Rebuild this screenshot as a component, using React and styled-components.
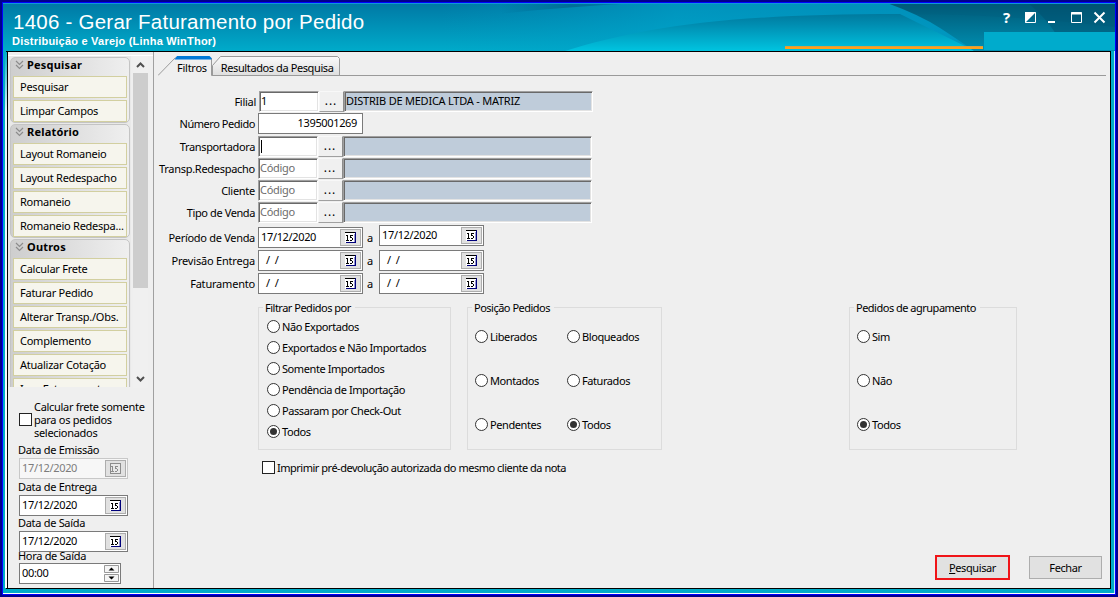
import React from "react";
import styled, { createGlobalStyle, css } from "styled-components";

const Global = createGlobalStyle`
  *, *::before, *::after { box-sizing: border-box; }
  body { margin: 0; overflow: hidden; }
  #root { font: 11px/13px "Noto Sans", "Liberation Sans", sans-serif; letter-spacing: -0.25px; color: #000; }
`;

const Outer = styled.div`
  width: 1118px; height: 597px; background: #00008b; padding: 2px;
`;
const Window = styled.div`
  height: 593px; border: 1px solid #0000ff; display: flex; flex-direction: column;
  background: #00acc8; box-shadow: inset 0 -1px 0 #fff, inset -1px 0 0 #b4e8f4;
`;
const Header = styled.header`
  position: relative; height: 48px; flex: none; padding: 8px 9px 0 9px;
  display: flex; justify-content: space-between; color: #fff;
`;
const HeaderArt = styled.svg`position: absolute; left: 0; top: 0; display: block;`;
const Titles = styled.div`position: relative; font-family: "Liberation Sans", Arial, sans-serif;`;
const Title = styled.h1`
  margin: 0; padding-left: 1px; font-size: 20.5px; line-height: 22px; font-weight: 400; letter-spacing: 0.24px; white-space: nowrap;
`;
const Subtitle = styled.div`font-size: 11px; line-height: 14px; font-weight: 700; letter-spacing: 0.22px; margin-top: 1px; white-space: nowrap;`;
const WinIcons = styled.svg`position: relative; display: block; flex: none; overflow: visible;`;

const Body = styled.div`
  height: 538px; flex: none; margin: 0 4px 0 3px; border: 1px solid #000; border-left: 0; display: flex; background: #efefef;
  position: relative;
  &::before { content: ""; position: absolute; left: -1px; top: 0; width: 2px; height: 536px; background: linear-gradient(#00acc8, #e8fbff 60px, #fff); }
`;
const Sidebar = styled.aside`
  width: 147px; flex: none; border-left: 1px solid #000; border-right: 1px solid #a0a0a0; margin-left: 1px;
`;
const Nav = styled.div`
  margin-top: 3px; height: 333px; display: flex; border-top: 1px solid #fff;
`;
const Groups = styled.div`
  width: 123px; height: 331px; overflow: hidden; padding: 1px 1px 0 2px; background: #e9e9e9;
`;
const Group = styled.section`
  width: 120px; border: 1px solid #c4c4c4; border-radius: 5px;
  background: linear-gradient(90deg, #cecece, #efefef); padding: 0 2px; margin-bottom: 1px;
`;
const GroupTitle = styled.h2`
  margin: 0; height: 18px; display: flex; align-items: center; gap: 3px; padding: 0 0 4px 2px;
  font: 700 11px/13px "Noto Sans", sans-serif; letter-spacing: 0.2px;
`;
const GroupName = styled.span`margin-top: -2px;`;
const GroupItem = styled.div`
  height: 22px; margin-bottom: 2px; border: 1px solid #d2cfa0; background: #f6f5ed; padding: 3px 0 0 6px; white-space: nowrap;
  &:last-child { margin-bottom: 0; }
`;
const Scroll = styled.div`
  width: 15px; display: flex; flex-direction: column; justify-content: space-between; background: #f0f0f0; margin-left: 2px;
`;
const Thumb = styled.div`height: 215px; background: #cdcdcd;`;
const ThumbTrack = styled.div`height: 298px;`;
const Arrow = styled.svg`display: block; width: 15px; height: 17px;`;

const SideOptions = styled.div`padding: 12px 0 0 11px; letter-spacing: -0.3px;`;
const CheckRow = styled.label`display: flex; align-items: center; gap: 2px; white-space: nowrap;`;
const PrintRow = styled(CheckRow)`margin: 11px 0 0 104px; letter-spacing: -0.49px;`;
const Box = styled.span`width: 13px; height: 13px; border: 1px solid #222; background: #fff; flex: none;`;
const SideLabel = styled.div`height: 13px; margin: ${p => p.$m}; position: relative; left: -1px; top: ${p => p.$top ?? -1}px; white-space: nowrap;`;

const DateBox = styled.div`
  width: ${p => p.$w || 105}px; height: 21px; flex: none; border: 1px solid ${p => (p.$off ? "#c8c8c8" : "#7a7a7a")};
  background: ${p => (p.$off ? "#f7f7f7" : "#fff")}; color: ${p => (p.$off ? "#7c7c7c" : "#000")};
  display: flex; justify-content: space-between; align-items: center; padding: 0 1px 0 2px;
  letter-spacing: -0.35px; white-space: pre;
`;
const Value = styled.span`margin-top: -2px;`;
const CalBtn = styled.span`
  width: 21px; height: 17px; background: #e1e1e1; border: 1px solid #adadad; display: flex; justify-content: center; align-items: center;
`;

const Main = styled.main`flex: 1; padding: 3px 4px 0 4px;`;
const Tabs = styled.div`height: 21px; display: flex; position: relative;`;
const TabArt = styled.svg`position: absolute; left: 0; top: 0;`;
const Tab = styled.div`position: relative; padding: ${p => p.$p}; white-space: nowrap; letter-spacing: ${p => p.$ls}px;`;

const Form = styled.div`padding: 15px 0 0;`;
const Row = styled.div`height: 21px; display: flex; margin-bottom: ${p => p.$gap ?? 1}px; padding-left: ${p => p.$x || 0}px;`;
const Label = styled.label`width: 97px; margin-right: 3px; display: flex; justify-content: flex-end; padding-top: 4px; white-space: nowrap; flex: none; letter-spacing: ${p => p.$ls ?? -0.28}px;`;
const sunken = css`
  border: 1px solid #fff; border-top-color: #a0a0a0; border-left-color: #a0a0a0;
  box-shadow: inset 1px 1px 0 #696969, inset -1px -1px 0 #e3e3e3;
`;
const Code = styled.div`
  width: 60px; height: 21px; ${sunken}; background: #fff; padding: 2px 0 0 ${p => p.$pl ?? 1}px; color: ${p => (p.$dark ? "#000" : "#6d6d6d")};
  letter-spacing: -0.3px;
`;
const Caret = styled.span`display: block; width: 1px; height: 13px; background: #000; margin: 1px 0 0 1px;`;
const Dots = styled.div`
  width: 25px; height: 21px; background: #f0f0f0; border: 1px solid #f8f8f8; border-right-color: #8c8c8c; border-bottom-color: #a0a0a0;
  text-align: center; padding: 2px 1px 0 0; letter-spacing: 1px; font-size: 12px;
`;
const Display = styled.div`
  width: 249px; height: 21px; ${sunken}; background: #bfccda; padding: 2px 0 0 1px; white-space: nowrap; letter-spacing: -0.23px;
`;
const NumberBox = styled.div`
  width: 105px; height: 21px; border: 1px solid #7a7a7a; background: #fff; text-align: right; padding: 2px 5px 0 0; letter-spacing: -0.35px;
`;
const Between = styled.span`width: 16px; text-align: center; padding: 4px 2px 0 0;`;
const DateRaise = styled.div`margin-top: ${p => p.$y || 0}px;`;

const Boxes = styled.div`display: flex; padding-left: 100px; margin-top: 13px;`;
const GroupBox = styled.fieldset`
  position: relative; margin: 0 ${p => p.$mr || 0}px 0 0; padding: 0; width: ${p => p.$w}px; height: 143px; border: 1px solid #dcdcdc; min-width: 0;
`;
const Legend = styled.div`
  position: absolute; left: 4px; top: -7px; background: #efefef; padding: 0 4px 0 2px; white-space: nowrap; letter-spacing: -0.5px;
`;
const Radios = styled.div`
  display: grid; grid-template-columns: ${p => p.$cols}; grid-auto-rows: ${p => p.$row}px; padding: ${p => p.$p};
`;
const RadioLabel = styled.label`display: flex; align-items: center; gap: 2px; height: 13px; white-space: nowrap; letter-spacing: -0.42px;`;
const Actions = styled.div`display: flex; justify-content: flex-end; gap: 19px; margin-top: 81px; padding-right: 4px;`;
const Button = styled.button`
  width: ${p => (p.$hot ? 75 : 73)}px; height: ${p => (p.$hot ? 25 : 23)}px; margin-top: ${p => (p.$hot ? 0 : 1)}px; padding: 0 0 1px; border: ${p => (p.$hot ? "2px solid #f01418" : "1px solid #adadad")};
  background: #e1e1e1; font: inherit; letter-spacing: -0.4px; color: #000;
`;
const Hotkey = styled.span`text-decoration: underline;`;

const Chevrons = () => (
  <svg width="9" height="10" fill="none" stroke="#8c8c8c" strokeWidth="1.2">
    <path d="M1 1l3.5 3.5L8 1M1 5l3.5 3.5L8 5" />
  </svg>
);
const Radio = ({ on }) => (
  <svg width="13" height="13">
    <circle cx="6.5" cy="6.5" r="6" fill="#fff" stroke="#333" />
    {on && <circle cx="6.5" cy="6.5" r="3.5" fill="#333" />}
  </svg>
);
const Calendar = ({ off }) => (
  <CalBtn>
    <svg width="13" height="13" shapeRendering="crispEdges">
      <rect x="1" y="1" width="11" height="11" fill={off ? "#e8e8e8" : "#fff"} />
      {off
        ? <path d="M1.500 1.500h10v10h-10z" fill="none" stroke="#8c8c8c" />
        : <><path d="M1 1.500h11" stroke="#000" /><path d="M11.500 1v11M2 11.500h10" fill="none" stroke="#00007a" /><path d="M10.500 3v8" stroke="#9a9ad0" /></>}
      <path d="M2 4.500h1M3.500 4v5M2 9.500h3M9 4.500H6.500V6.500H8M8.500 7v2M6 9.500h2" fill="none" stroke={off ? "#8c8c8c" : "#000"} />
    </svg>
  </CalBtn>
);
const DateField = ({ value, w, off }) => (
  <DateBox $w={w} $off={off}><Value>{value}</Value><Calendar off={off} /></DateBox>
);

const groups = [
  ["Pesquisar", ["Pesquisar", "Limpar Campos"]],
  ["Relatório", ["Layout Romaneio", "Layout Redespacho", "Romaneio", "Romaneio Redespa..."]],
  ["Outros", ["Calcular Frete", "Faturar Pedido", "Alterar Transp./Obs.", "Complemento", "Atualizar Cotação", "Imp.Faturamento"]],
];
const RadioList = ({ items, cols = "1fr", row, p }) => (
  <Radios $cols={cols} $row={row} $p={p}>
    {items.map((t) => <RadioLabel key={t}><Radio on={t === "Todos"} />{t}</RadioLabel>)}
  </Radios>
);

function Art() {
  return (
    <HeaderArt width="1112" height="48" viewBox="3 3 1112 48">
      <defs>
        <linearGradient id="base" x2="0" y2="1"><stop stopColor="#0078a4" /><stop offset="1" stopColor="#00abca" /></linearGradient>
        <linearGradient id="wave" x2="0" y2="1"><stop stopColor="#007a9e" /><stop offset=".3" stopColor="#008eb2" /><stop offset="1" stopColor="#00c4e0" /></linearGradient>
        <linearGradient id="fade"><stop stopColor="#009cc4" stopOpacity="0" /><stop offset=".35" stopColor="#00a4cc" stopOpacity=".6" /><stop offset=".6" stopColor="#0096c0" stopOpacity=".8" /></linearGradient>
        <linearGradient id="shade"><stop stopColor="#006890" stopOpacity="0" /><stop offset=".5" stopColor="#006890" stopOpacity=".8" /><stop offset="1" stopColor="#006c98" stopOpacity=".5" /></linearGradient>
        <linearGradient id="deep" x2="0" y2="1"><stop stopColor="#005876" /><stop offset="1" stopColor="#0090b2" /></linearGradient>
      </defs>
      <rect x="3" y="3" width="1112" height="48" fill="url(#base)" />
      <path d="M440 3H1115V51H440Z" fill="url(#fade)" />
      <path d="M500 14Q560 7 640 3H500Z" fill="url(#shade)" />
      <path d="M565 51C640 28 720 14 900 14L975 51Z" fill="url(#wave)" />
      <path d="M887 3Q920 15 940 28T974 51H1115V3Z" fill="url(#deep)" />
      <path d="M887 3Q905 8 916 14Q1000 14 1115 27V3Z" fill="#005a7c" opacity=".25" />
      <path d="M1028 3Q1046 18 1056 34H1115V3Z" fill="#004c68" opacity=".4" />
      <path d="M3 3.500H1115" stroke="#1198d8" />
      <rect x="984" y="32" width="131" height="18" fill="#00abcc" />
      <rect x="785" y="46" width="198" height="3" fill="#d8a040" />
      <rect x="785" y="47" width="198" height="2" fill="#ffa01c" />
    </HeaderArt>
  );
}

export default function App() {
  return (
    <Outer>
      <Global />
      <Window>
        <Header>
          <Art />
          <Titles>
            <Title>1406 - Gerar Faturamento por Pedido</Title>
            <Subtitle>Distribuição e Varejo (Linha WinThor)</Subtitle>
          </Titles>
          <WinIcons width="104" height="16" viewBox="1002 11 104 16" fill="none" stroke="#fff" strokeWidth="2">
            <text x="1003" y="23" fill="#fff" stroke="none" fontFamily="Noto Sans" fontWeight="700" fontSize="15">?</text>
            <path d="M1025.500 12.500h10v10h-10z" strokeWidth="1" /><path d="M1025 12h11L1025 23z" fill="#fff" stroke="none" />
            <path d="M1048 22h7M1071 13.500h11" />
            <path d="M1071.500 12.500h10v10h-10z" strokeWidth="1" />
            <path d="M1094.500 12.500l10 10M1104.500 12.500l-10 10" />
          </WinIcons>
        </Header>
        <Body>
          <Sidebar>
            <Nav>
              <Groups>
                {groups.map(([name, items]) => (
                  <Group key={name}>
                    <GroupTitle><Chevrons /><GroupName>{name}</GroupName></GroupTitle>
                    {items.map((t) => <GroupItem key={t}>{t}</GroupItem>)}
                  </Group>
                ))}
              </Groups>
              <Scroll>
                <Arrow><path d="M4 11l3.500-3.500L11 11" fill="none" stroke="#505050" strokeWidth="2" /></Arrow>
                <ThumbTrack><Thumb /></ThumbTrack>
                <Arrow><path d="M4 6l3.500 3.500L11 6" fill="none" stroke="#505050" strokeWidth="2" /></Arrow>
              </Scroll>
            </Nav>
            <SideOptions>
              <CheckRow><Box /><span>Calcular frete somente<br />para os pedidos<br />selecionados</span></CheckRow>
              <SideLabel $m="5px 0 1px">Data de Emissão</SideLabel>
              <DateField value="17/12/2020" w={109} off />
              <SideLabel $m="2px 0 1px">Data de Entrega</SideLabel>
              <DateField value="17/12/2020" w={109} />
              <SideLabel $m="1px 0 1px">Data de Saída</SideLabel>
              <DateField value="17/12/2020" w={109} />
              <SideLabel $m="-3px 0 1px" $top={0}>Hora de Saída</SideLabel>
              <DateBox $w={102}>
                <Value>00:00</Value>
                <svg width="15" height="19">
                  <path d="M0.500 1.500h14v7H.5zM.5 10.500h14v7H.5z" fill="#f4f4f4" stroke="#999" />
                  <path d="M4.500 6.500l3-3 3 3zM4.500 12.500l3 3 3-3z" fill="#000" />
                </svg>
              </DateBox>
            </SideOptions>
          </Sidebar>
          <Main>
            <Tabs>
              <TabArt width="950" height="21" viewBox="158 55 950 21">
                <defs><linearGradient id="tab" x2="0" y2="1"><stop stopColor="#fafafa" /><stop offset="1" stopColor="#dedede" /></linearGradient></defs>
                <path d="M212.500 75.500V65.500L220.500 56.500H337.500L339.500 58.500V75.500" fill="url(#tab)" stroke="#9a9a9a" />
                <path d="M158 75.500L175.500 57.500M211.500 58V75.500H1106" fill="none" stroke="#9a9a9a" />
                <path d="M177 56H209.500L211.500 58V59.500H174.500Z" fill="#0078d7" />
              </TabArt>
              <Tab $p="6px 0 0 19px" $ls={-0.25}>Filtros</Tab>
              <Tab $p="6px 0 0 14px" $ls={-0.4}>Resultados da Pesquisa</Tab>
            </Tabs>
            <Form>
              <Row $x={1}><Label>Filial</Label><Code $dark>1</Code><Dots>...</Dots><Display>DISTRIB DE MEDICA LTDA - MATRIZ</Display></Row>
              <Row $gap={2}><Label $ls={-0.45}>Número Pedido</Label><NumberBox>1395001269</NumberBox></Row>
              <Row><Label $ls={-0.35}>Transportadora</Label><Code $dark><Caret /></Code><Dots>...</Dots><Display /></Row>
              {["Transp.Redespacho", "Cliente"].map((t) => (
                <Row key={t}><Label>{t}</Label><Code>Código</Code><Dots>...</Dots><Display /></Row>
              ))}
              <Row $gap={4}><Label $ls={-0.4}>Tipo de Venda</Label><Code>Código</Code><Dots>...</Dots><Display /></Row>
              <Row $gap={2}>
                <Label $ls={-0.3}>Período de Venda</Label><DateField value="17/12/2020" /><Between>a</Between>
                <DateRaise $y={-2}><DateField value="17/12/2020" /></DateRaise>
              </Row>
              {["Previsão Entrega", "Faturamento"].map((t) => (
                <Row key={t} $gap={2}><Label $ls={-0.2}>{t}</Label><DateField value="  /  /" /><Between>a</Between><DateField value="  /  /" /></Row>
              ))}
            </Form>
            <Boxes>
              <GroupBox $w={193} $mr={16}>
                <Legend>Filtrar Pedidos por</Legend>
                <RadioList row={21} p="12px 0 0 8px" items={["Não Exportados", "Exportados e Não Importados", "Somente Importados", "Pendência de Importação", "Passaram por Check-Out", "Todos"]} />
              </GroupBox>
              <GroupBox $w={195} $mr={187}>
                <Legend>Posição Pedidos</Legend>
                <RadioList row={44} cols="92px 92px" p="22px 0 0 7px" items={["Liberados", "Bloqueados", "Montados", "Faturados", "Pendentes", "Todos"]} />
              </GroupBox>
              <GroupBox $w={168}>
                <Legend>Pedidos de agrupamento</Legend>
                <RadioList row={44} p="22px 0 0 7px" items={["Sim", "Não", "Todos"]} />
              </GroupBox>
            </Boxes>
            <PrintRow><Box />Imprimir pré-devolução autorizada do mesmo cliente da nota</PrintRow>
            <Actions><Button $hot><Hotkey>P</Hotkey>esquisar</Button><Button>Fechar</Button></Actions>
          </Main>
        </Body>
      </Window>
    </Outer>
  );
}
